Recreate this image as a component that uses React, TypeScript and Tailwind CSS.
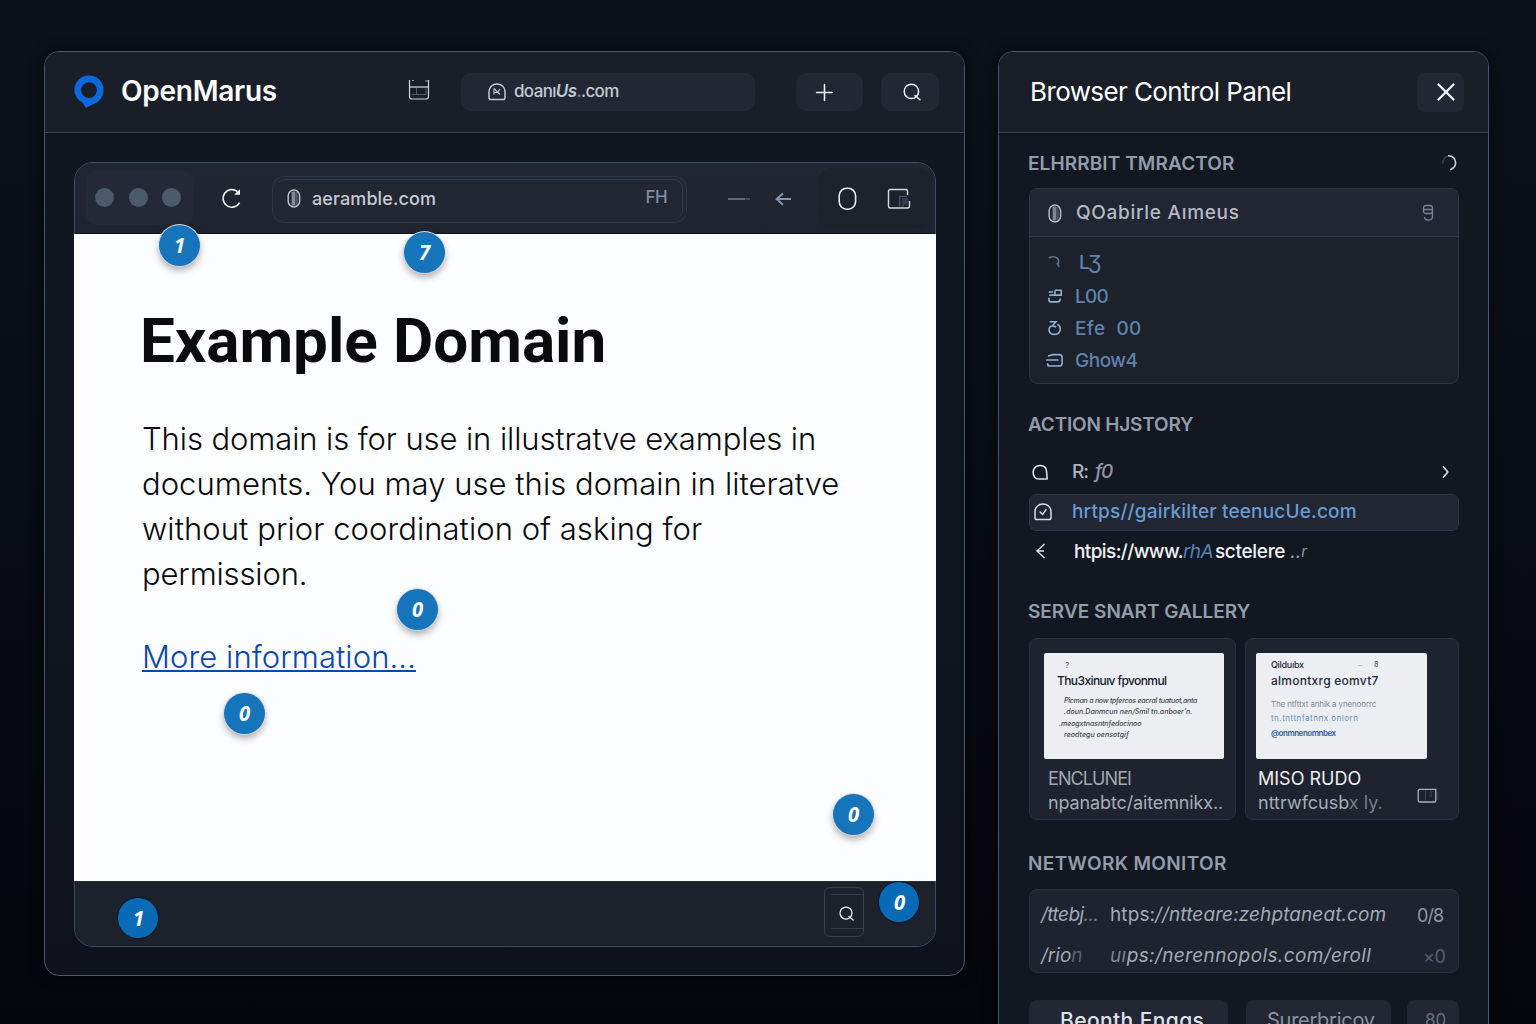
import type { ReactNode } from 'react';
import { Plus, X } from 'lucide-react';

const SANS = "font-['Inter','Liberation_Sans',sans-serif]";

function Logo() {
  return (
    <svg width="30" height="33" viewBox="0 0 30 33" className="shrink-0">
      <path
        fillRule="evenodd"
        fill="#0d68dd"
        d="M15 0.5C23 0.5 29.6 6.6 29.6 14.8C29.6 20.5 26.8 25 22.6 27.6L12.8 32.2C11.6 32.7 11 32.2 10.6 31.2L9 28C4 25.4 0.4 20.6 0.4 14.8C0.4 6.6 7 0.5 15 0.5ZM15 7.2A7.9 7.9 0 1 0 15 23A7.9 7.9 0 1 0 15 7.2Z"
      />
    </svg>
  );
}

function CalendarIcon() {
  return (
    <svg width="22" height="22" viewBox="0 0 22 22" fill="none" className="shrink-0">
      <path d="M1.5 1V17.5Q1.5 20 4 20H18Q20.5 20 20.5 17.5V1" stroke="#cfd5df" strokeWidth="1.2" />
      <path d="M4 1.5H6M17 2H20" stroke="#8b93a1" strokeWidth="1" />
      <path d="M2 8H20.5" stroke="#d9dee6" strokeWidth="1.2" />
      <path d="M3.5 15.5H18M8.5 9V16M18 9V16" stroke="#626b7a" strokeWidth="0.8" />
    </svg>
  );
}

function DomeIcon({ children, className = '' }: { children: ReactNode; className?: string }) {
  return (
    <svg width="18" height="18" viewBox="0 0 18 18" fill="none" stroke="currentColor" strokeWidth="1.5" className={`shrink-0 ${className}`}>
      <path d="M2.8 16.6Q1 16.6 1 14.8V8.6C1 4.2 4.4 1.1 9 1.1C13.6 1.1 17 4.2 17 8.6V14.8Q17 16.6 15.2 16.6Z" />
      {children}
    </svg>
  );
}

function SearchIcon({ size }: { size: number }) {
  return (
    <svg width={size} height={size} viewBox="0 0 18 18" fill="none" stroke="#eef1f6" strokeWidth="1.5" className="shrink-0">
      <circle cx="8.4" cy="8.4" r="7.2" />
      <path d="M12 12.6L17 16.8" strokeLinecap="round" />
    </svg>
  );
}

function PillIcon({ className = '' }: { className?: string }) {
  return (
    <svg width="14" height="19" viewBox="0 0 14 19" fill="none" className={className}>
      <rect x="1.2" y="1" width="11.4" height="17" rx="5.7" stroke="currentColor" strokeWidth="1.5" />
      <rect x="4.6" y="2.5" width="3.8" height="14" fill="currentColor" opacity="0.65" />
      <path d="M9.9 3V16" stroke="currentColor" strokeWidth="0.8" opacity="0.7" />
    </svg>
  );
}

function ReloadIcon() {
  return (
    <svg width="21" height="22" viewBox="0 0 21 22" fill="none" stroke="#eceff4" strokeWidth="1.7">
      <path d="M18.6 15.6A8.8 8.8 0 1 1 16.4 4.6" />
      <path d="M19 2.2V7.8H13.2L15.6 5.2Z" fill="#eceff4" stroke="none" />
    </svg>
  );
}

function Badge({ n, className }: { n: string; className: string }) {
  return (
    <div
      className={`absolute flex items-center justify-center rounded-full pb-[3px] font-['Open_Sans',sans-serif] text-[22px] font-bold leading-none text-white italic ${className}`}
    >
      <span className="translate-x-[.5px] scale-x-[.92]">{n}</span>
    </div>
  );
}

const LIGHT = 'size-[41px] bg-[#1674ba] shadow-[0_0_0_1px_#dcd9dc,0_4px_7px_rgba(40,30,40,.38)]';
const DARK = 'size-[40px] bg-[#096ab6] shadow-[0_0_0_1px_#10182a]';

function Header({ children }: { children: ReactNode }) {
  return (
    <div className="flex h-[81px] shrink-0 items-center rounded-t-[14px] border-b border-[#36435a] bg-[#1a1e29] shadow-[0_1px_1px_rgba(0,0,0,.5)]">
      {children}
    </div>
  );
}

function MainWindow() {
  return (
    <section className="flex h-[925px] w-[921px] shrink-0 flex-col rounded-[15px] border border-[#4a5874] bg-gradient-to-b from-[#131722] to-[#0f121c] shadow-[0_0_14px_rgba(0,0,0,.6)]">
      <Header>
        <div className="-mt-px ml-[29px] flex">
          <Logo />
        </div>
        <h1 className="-mt-[2px] ml-[17px] w-[157px] text-[28px] font-semibold tracking-[-.25px] text-white">OpenMarus</h1>
        <div className="-mt-[5px] ml-[130px] flex">
          <CalendarIcon />
        </div>
        <div className="ml-[31px] flex h-[38px] w-[294px] items-center rounded-[10px] bg-[#222733] pl-[27px] text-[#c3c9d3]">
          <DomeIcon>
            <path d="M6 5.5L12 11.5M6 5.5V11.5M6 9.5H9.5L12 6" strokeWidth="1.1" />
          </DomeIcon>
          <span className="ml-[8px] text-[17px] font-medium tracking-[-.65px] whitespace-pre">
            doanı<i className="font-semibold">Us</i>
            <span className="text-[#7e8795]">.</span>.com
          </span>
        </div>
        <div className="ml-[41px] flex h-[38px] w-[67px] items-center rounded-[10px] bg-[#222733] pl-[15px]">
          <Plus size={27} strokeWidth={1.4} className="text-[#f2f4f8]" />
        </div>
        <div className="ml-[18px] flex h-[38px] w-[58px] items-center rounded-[10px] bg-[#222733] pl-[22px]">
          <SearchIcon size={18} />
        </div>
      </Header>
      <div className="mt-[29px] ml-[29px] flex h-[785px] w-[862px] flex-col rounded-[19px] border border-[#3e4b61] bg-[#1c212d]">
        <div className="flex h-[71px] shrink-0 items-center rounded-t-[18px] border-b border-[#0d1119] bg-gradient-to-b from-[#212632] to-[#1f2430] pb-px">
          <div className="ml-[11px] flex h-[54px] w-[107px] items-center gap-[14.5px] rounded-[10px] bg-[#232936] pl-[9px]">
            <span className="size-[19px] rounded-full bg-[#4d5a69]" />
            <span className="size-[19px] rounded-full bg-[#4d5a69]" />
            <span className="size-[19px] rounded-full bg-[#4d5a69]" />
          </div>
          <div className="ml-[28px] flex">
            <ReloadIcon />
          </div>
          <div className="mt-[3px] ml-[30px] flex h-[47px] w-[415px] items-center justify-between rounded-[12px] border border-[#303848] bg-[#222733] p-[3px]">
            <div className="flex h-[40px] w-full items-center justify-between rounded-[9px] border-t border-r border-[#333c4d] pr-[15px] pb-[2px] pl-[11px]">
              <div className="flex items-center">
                <PillIcon className="text-[#b9c0cb]" />
                <span className="ml-[11px] text-[18px] font-medium tracking-[.1px] text-[#c4cad4]">aeramble.com</span>
              </div>
              <span className="-mt-px text-[17px] font-medium tracking-[-.6px] text-[#7d8da4]">FH</span>
            </div>
          </div>
          <svg width="22" height="4" viewBox="0 0 22 4" className="mt-[3px] ml-[41px]">
            <path d="M0 2H17" stroke="#8090a6" strokeWidth="1.3" />
            <path d="M17 2H22" stroke="#4c596d" strokeWidth="1.3" />
          </svg>
          <svg width="17" height="14" viewBox="0 0 17 14" fill="none" stroke="#8496af" strokeWidth="2" className="mt-[3px] ml-[25px]">
            <path d="M8 1.4L1.6 7L8 12.8M1.6 7H16" />
          </svg>
          <div className="ml-[26px] flex h-[60px] w-[114px] items-center rounded-[14px] bg-[#1d222c]">
            <svg width="20" height="24" viewBox="0 0 20 24" fill="none" className="mt-[2px] ml-[20px]">
              <rect x="1.2" y="1.2" width="16.4" height="21" rx="7.6" stroke="#e8ebf1" strokeWidth="1.6" />
            </svg>
            <svg width="24" height="22" viewBox="0 0 24 22" fill="none" className="mt-[2px] ml-[29px]">
              <path d="M20.5 7V3Q20.5 1.5 19 1.5H3.2Q1.5 1.5 1.5 3.2V18.2Q1.5 20 3.2 20H20.5Q22.5 20 22.5 18V13" stroke="#d5dae2" strokeWidth="1.4" />
              <path d="M12.8 19V8.4H20M16 12V19" stroke="#4a5464" strokeWidth="1.2" />
              <rect x="15" y="10" width="6" height="7" fill="#343c4a" />
            </svg>
          </div>
        </div>
        <article className="-mx-px flex h-[647px] shrink-0 flex-col bg-[#fcfdff] pt-[71px] pl-[68px]">
          <h2 className="-ml-[2px] font-['Roboto',sans-serif] text-[62px] leading-[72px] font-bold tracking-[-.05px] text-[#0b0b0d]">
            Example Domain
          </h2>
          <p className="mt-[39px] text-[31px] leading-[45px] font-[350] whitespace-nowrap text-[#0a0a0c]">
            <span className="block tracking-[-.1px]">This domain is for use in illustratve examples in</span>
            <span className="block tracking-[.04px]">documents. You may use this domain in literatve</span>
            <span className="block tracking-[.07px]">without prior coordination of asking for</span>
            <span className="block tracking-[-.15px]">permission.</span>
          </p>
          <a className="mt-[38px] self-start text-[31px] leading-[45px] font-[350] tracking-[.09px] text-[#0a48ae] underline decoration-[1.5px] underline-offset-[2px] [text-decoration-skip-ink:none]">
            More information...
          </a>
        </article>
        <div className="flex grow items-center justify-end rounded-b-[18px] border-t border-[#252d3a] bg-[#1c212c]">
          <div className="-mt-[4px] mr-[71px] flex h-[50px] w-[40px] rounded-[6px] border border-[#38434f] py-[6px] pl-[6px]">
            <div className="flex h-[35px] w-full items-center justify-center border-t border-b border-[#343e4b] pt-[4px] pr-[1px]">
              <SearchIcon size={15} />
            </div>
          </div>
        </div>
      </div>
    </section>
  );
}

function SectionTitle({ children, className }: { children: ReactNode; className: string }) {
  return <h3 className={`-ml-px text-[19px] leading-[24px] font-semibold whitespace-nowrap text-[#929dac] ${className}`}>{children}</h3>;
}

function ExtractorRow({ icon, label, className }: { icon: ReactNode; label: string; className: string }) {
  return (
    <div className="flex h-[32px] items-center text-[#8fb2d6]">
      <svg width="18" height="16" viewBox="0 0 20 18" fill="none" stroke="currentColor" strokeWidth="1.8" className="-mt-[2px] ml-[16px] shrink-0">
        {icon}
      </svg>
      <span className={`text-[19px] font-medium whitespace-pre text-[#6082ab] ${className}`}>{label}</span>
    </div>
  );
}

function ControlPanel() {
  return (
    <aside className="flex h-[1000px] w-[491px] shrink-0 flex-col rounded-t-[15px] border border-[#4a5874] bg-[#131722] shadow-[0_0_14px_rgba(0,0,0,.6)]">
      <Header>
        <h2 className="-mt-[2px] ml-[31px] w-[387px] text-[26px] tracking-[-.6px] text-white">Browser Control Panel</h2>
        <div className="flex h-[39px] w-[47px] items-center rounded-[8px] bg-[#222733] pl-[14px]">
          <X size={30} strokeWidth={1.8} className="-mt-px shrink-0 text-[#eef1f6]" />
        </div>
      </Header>

      <div className="flex w-[460px] flex-col pl-[30px]">
        <div className="mt-[19px] flex items-center justify-between pr-[2px]">
          <SectionTitle className="tracking-[.1px]">ELHRRBIT TMRACTOR</SectionTitle>
          <svg width="16" height="18" viewBox="0 0 16 18" fill="none" strokeWidth="1.7" className="-mt-[3px]">
            <path d="M7 2C11.5 1.6 14.6 4.6 14.6 8.6C14.6 12 12.6 14.6 9.2 15.8" stroke="#c3cad5" />
            <path d="M7 2C3.6 3 1.6 5.6 1.8 9.6" stroke="#454f5f" strokeWidth="1.2" />
          </svg>
        </div>

        <div className="mt-[12px] flex h-[196px] flex-col rounded-[9px] border border-[#2e3747] bg-[#1c212c]">
          <div className="flex h-[48px] items-center rounded-t-[8px] border-b border-[#333d4c] bg-[#212632] pt-px">
            <PillIcon className="ml-[18px] text-[#b3bac5]" />
            <span className="ml-[14px] text-[19px] font-medium tracking-[.7px] text-[#b4bbc6]">QOabirle Aımeus</span>
            <svg width="12" height="18" viewBox="0 0 12 18" fill="none" stroke="#76859a" strokeWidth="1.3" className="-mt-px mr-[24px] ml-auto">
              <rect x="1.5" y="1.5" width="9" height="8" rx="2.5" />
              <path d="M2 5.5H10M2.5 13Q2.5 16 6 16Q10.5 16 10.5 12.5V8" />
            </svg>
          </div>
          <div className="mt-[10px] flex flex-col">
            <ExtractorRow
              icon={<path d="M3 4.5C8 1.5 13.5 3.5 14 7.5V12M12 10L14.6 14.5" opacity=".55" />}
              label="LƷ"
              className="ml-[15px] tracking-[-1.5px]"
            />
            <div className="h-[2px]" />
            <ExtractorRow
              icon={<path d="M3 4.5H8M10 2.5H17V8H3.6M10 2.5V8M3.2 11V13.4Q3.2 15.6 5.4 15.6H13Q15.8 15.6 16 12" />}
              label="L00"
              className="ml-[11px] tracking-[-.8px]"
            />
            <ExtractorRow
              icon={<path d="M4 2H11L7 6.5L11.4 8M6 6.6C1.6 9 2.5 16.2 9.5 16.2C17.4 16.2 17.4 6.4 12.5 5" />}
              label="Efe  00"
              className="ml-[11px] tracking-[.4px]"
            />
            <ExtractorRow
              icon={<path d="M2 4.5L8 3H15Q18.5 3.5 18 7V13Q17.5 15.8 15 15.8H4Q1.4 15.6 1.6 12.6M0 9H14" />}
              label="Ghow4"
              className="ml-[11px] tracking-[-.5px]"
            />
          </div>
        </div>

        <SectionTitle className="mt-[29px] tracking-[-.2px]">ACTION HJSTORY</SectionTitle>

        <div className="mt-[16px] mb-[2px] flex h-[39px] items-center">
          <svg width="18" height="17" viewBox="0 0 18 17" fill="none" stroke="#dfe7f0" strokeWidth="1.5" className="ml-[3px]">
            <path d="M5 14.8C.8 13.6 .4 7 2.4 4.2C5 .6 11.2.6 13.6 4C15 6.4 14.6 11 15.2 14.8Q10 15.4 5 14.8Z" />
          </svg>
          <span className="ml-[22px] flex text-[19px] font-medium whitespace-pre">
            <span className="tracking-[-1px] text-[#a9b3c2]">R:</span>
            <i className="ml-[7px] tracking-[-1.5px] text-[#8d97a8]">f0</i>
          </span>
          <svg width="9" height="14" viewBox="0 0 9 14" fill="none" stroke="#dfe4ec" strokeWidth="1.6" className="-mt-px mr-[9px] ml-auto">
            <path d="M2 1.2L6.8 7L2 12.8" />
          </svg>
        </div>
        <div className="flex h-[37px] items-center rounded-[7px] border border-[#2c3544] bg-[#212632]">
          <DomeIcon className="-mt-[2px] ml-[4px] text-[#d5dfeb]">
            <path d="M5.6 8.6L8.6 11.4L12.4 6.2" strokeWidth="1.4" />
          </DomeIcon>
          <span className="ml-[20px] text-[19px] font-medium tracking-[.17px] whitespace-nowrap text-[#6a9cd3]">hrtps//gairkilter teenucUe.com</span>
        </div>
        <div className="flex h-[43px] items-center">
          <svg width="13" height="16" viewBox="0 0 13 16" fill="none" stroke="#dfe7f0" strokeWidth="1.4" className="-mt-[3px] ml-[6px]">
            <path d="M9.5 1L2 8L9.5 15M2 8H9" />
          </svg>
          <span className="ml-[26px] flex text-[19px] font-[450] whitespace-pre text-[#f0f2f6]">
            <span className="tracking-[-.6px]">htpis://www.</span>
            <i className="w-[32px] tracking-[-.6px] text-[#5683b4]">rhA</i>
            <span className="tracking-[-.3px]">sctelere</span>
            <i className="ml-[5px] text-[#9aa3b0]">..</i>
            <i className="text-[15px] leading-[28px] text-[#8b94a2]">r</i>
          </span>
        </div>

        <SectionTitle className="mt-[26px] tracking-[0px]">SERVE SNART GALLERY</SectionTitle>

        <div className="mt-[14px] flex gap-[9px]">
          <div className="flex h-[182px] w-[207px] shrink-0 flex-col rounded-[8px] border border-[#293140] bg-[#1e232f]">
            <div className="mt-[14px] ml-[14px] flex h-[106px] w-[180px] flex-col rounded-[2px] bg-[#edeef2] pl-[13px] whitespace-nowrap">
              <span className="mt-[6px] ml-[8px] text-[8px] leading-[12px] text-[#4f5c6e]">?</span>
              <span className="mt-[2px] text-[12px] leading-[16px] font-medium tracking-[-.6px] text-[#0f1b2e]">Thu3xinuıv fpvonmul</span>
              <div className="mt-[6px] flex flex-col text-[7px] leading-[11.4px] font-medium text-[#42464e] italic">
                <span className="ml-[7px] tracking-[-.25px]">Picman a now tpfercos eacral tuatuot,anta</span>
                <span className="ml-[7px] tracking-[.02px]">.doun.Danmcun nen/Smil tn.anboer’n.</span>
                <span className="ml-[2px] tracking-[-.08px]">.meogxtnasntnfedocinoo</span>
                <span className="ml-[7px] tracking-[.05px]">reodtegu oensotgif</span>
              </div>
            </div>
            <span className="mt-[7px] ml-[18px] text-[18px] leading-[25px] tracking-[-.9px] text-[#a0a7b3]">ENCLUNEl</span>
            <span className="ml-[18px] text-[18px] leading-[23px] tracking-[-.13px] whitespace-nowrap text-[#a6adb8]">npanabtc/aitemnikx..</span>
          </div>
          <div className="flex h-[182px] w-[214px] shrink-0 flex-col rounded-[8px] border border-[#293140] bg-[#1e232f]">
            <div className="mt-[14px] ml-[10px] flex h-[106px] w-[171px] flex-col rounded-[2px] bg-[#edeef2] pl-[15px] whitespace-nowrap">
              <div className="mt-[6px] flex text-[9px] leading-[12px] font-medium text-[#1d2a3d]">
                <span className="w-[87px] tracking-[-.3px]">Qilduıbx</span>
                <span className="w-[16px] text-[#b4b8c0]">–</span>
                <span className="text-[7px] text-[#4f5c6e]">8</span>
              </div>
              <span className="mt-[2px] text-[12px] leading-[16px] font-medium tracking-[.25px] text-[#1c2a3e]">almontxrg eomvt7</span>
              <div className="mt-[8px] flex flex-col text-[8px] leading-[14.3px]">
                <span className="tracking-[-.14px] text-[#868a92]">The ntfttxt anhlk a ynenoorrc</span>
                <span className="tracking-[.5px] text-[#5b8fc4]">tn.tnttnfatnnx onlorn</span>
                <span className="font-semibold tracking-[-.45px] text-[#2b5fa6]">@onmnenomnbex</span>
              </div>
            </div>
            <span className="mt-[7px] ml-[12px] text-[18px] leading-[25px] tracking-[0px] text-[#eceff3]">MISO RUDO</span>
            <div className="flex">
              <span className="ml-[12px] w-[159px] text-[18px] leading-[23px] tracking-[0px] whitespace-pre text-[#a6adb8]">
                nttrwfcusb<span className="text-[#747d8b]">x ly.</span>
              </span>
              <svg width="22" height="16" viewBox="0 0 22 16" fill="none" className="-mt-[3px]">
                <path d="M19.5 1.4H2.6Q1.2 1.4 1.2 2.8V12.6Q1.2 14 2.6 14H17.4Q18.8 14 18.8 12.4V2" stroke="#a9b0bc" strokeWidth="1.3" />
                <path d="M8.5 2.5V12.5M14 2.5V9M21 4V12" stroke="#3e4756" strokeWidth="1" />
              </svg>
            </div>
          </div>
        </div>

        <SectionTitle className="mt-[32px] tracking-[.35px]">NETWORK MONITOR</SectionTitle>

        <div className="mt-[13px] flex h-[84px] flex-col rounded-[8px] border border-[#293140] bg-[#1e232f] pt-[5px] text-[19px] text-[#a3aab6] italic">
          <div className="flex h-[41px] shrink-0 items-center whitespace-nowrap">
            <span className="ml-[11px] w-[69px] tracking-[-.55px]">
              /ttebj<span className="text-[#717a88]">...</span>
            </span>
            <span className="w-[307px] tracking-[.1px]">
              <span className="not-italic">htps:</span>//ntteare:zehptaneat.com
            </span>
            <span className="text-[18px] tracking-[-.9px] text-[#8f98a5] not-italic">0/8</span>
          </div>
          <div className="flex h-[41px] shrink-0 items-center whitespace-nowrap">
            <span className="ml-[11px] w-[69px]">
              /rio<span className="text-[#59626f]">n</span>
            </span>
            <span className="w-[313px] tracking-[.38px]">
              <span className="text-[#7b8492]">uı</span>ps:/nerennopols.com/eroll
            </span>
            <span className="text-[18px] tracking-[-.5px] text-[#56606f] not-italic">×0</span>
          </div>
        </div>

        <div className="mt-[27px] flex h-[44px] text-[20px] leading-[41px] whitespace-nowrap">
          <div className="w-[199px] rounded-[8px] bg-[#222733] pl-[31px] text-[21px] font-medium tracking-[.4px] text-[#dfe3e9]">Beonth Enggs</div>
          <div className="ml-[18px] w-[145px] rounded-[8px] bg-[#222733] pl-[21px] tracking-[-.25px] text-[#8b94a2]">Surerbricoy</div>
          <div className="ml-[16px] w-[52px] rounded-[8px] bg-[#222733] pl-[18px] text-[17px] text-[#667081]">80</div>
        </div>
      </div>
    </aside>
  );
}

export default function App() {
  return (
    <main className={`relative flex h-[1024px] w-[1536px] gap-[33px] overflow-hidden bg-gradient-to-b from-[#0d111b] via-[#080b12] via-60% to-[#04060b] pt-[51px] pl-[44px] ${SANS}`}>
      <MainWindow />
      <ControlPanel />
      <Badge n="1" className={`top-[225px] left-[159px] ${LIGHT}`} />
      <Badge n="7" className={`top-[232px] left-[404px] ${LIGHT}`} />
      <Badge n="0" className={`top-[589px] left-[397px] ${LIGHT}`} />
      <Badge n="0" className={`top-[693px] left-[224px] ${LIGHT}`} />
      <Badge n="0" className={`top-[794px] left-[833px] ${LIGHT}`} />
      <Badge n="0" className={`top-[882px] left-[879px] ${DARK}`} />
      <Badge n="1" className={`top-[898px] left-[118px] ${DARK}`} />
    </main>
  );
}
